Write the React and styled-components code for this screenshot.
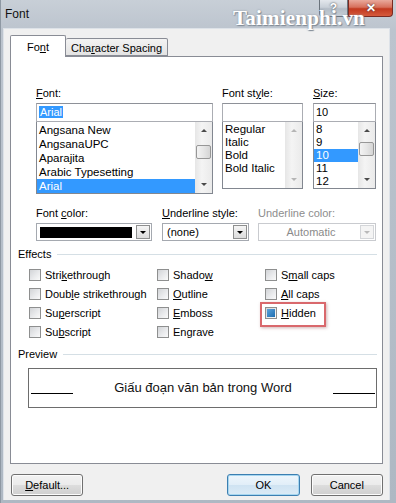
import React from 'react';
import styled, { createGlobalStyle } from 'styled-components';

const GlobalStyle = createGlobalStyle`
  html, body {
    margin: 0;
    padding: 0;
    background: #b9c2cc;
  }
  body {
    font-family: "Liberation Sans", Arial, sans-serif;
    font-size: 11px;
    color: #000;
  }
  u { text-decoration: underline; text-underline-offset: 1px; }
`

const Window = styled.div`
  position: relative;
  width: 396px;
  height: 503px;
  box-sizing: border-box;
  padding: 0 6px 3px 2px;
  display: flex;
  flex-direction: column;
  background: linear-gradient(180deg, #c8cfd7 0%, #bcc4ce 30px, #aeb8c3 100%);
  border-left: 1px solid #8e98a3;
  overflow: hidden;
`

const TitleBar = styled.div`
  height: 28px;
  display: flex;
  align-items: flex-start;
`

const Title = styled.div`
  font-size: 12px;
  padding: 7px 0 0 2px;
  color: #111;
`

const CaptionButtons = styled.div`
  margin-left: auto;
  margin-right: -3px;
  display: flex;
`

const CaptionBtn = styled.div`
  width: ${({w}) => w}px;
  height: 17px;
  box-sizing: border-box;
  border: 1px solid ${({close}) => close ? '#7a2a22' : '#6a737c'};
  border-top: none;
  border-radius: ${({close}) => close ? '0 0 4px 0' : '0 0 0 4px'};
  background: ${({close}) => close
    ? 'linear-gradient(180deg, #e9a99c 0%, #d7705c 45%, #c2391f 55%, #d55a3c 100%)'
    : 'linear-gradient(180deg, #e3e7ec 0%, #c9d0d8 45%, #b3bcc6 55%, #c6ced7 100%)'};
  color: #fff;
  font-weight: bold;
  font-size: 12px;
  display: flex;
  align-items: center;
  justify-content: center;
  text-shadow: 0 0 2px #333;
`

const Watermark = styled.div`
  position: absolute;
  left: 232px;
  top: 7px;
  font-family: "Liberation Serif", "Times New Roman", serif;
  font-weight: bold;
  font-size: 21px;
  line-height: 22px;
  color: #fff;
  letter-spacing: 0.2px;
  text-shadow: 0 0 2px #8d97a3, 1px 1px 1px #7d8793;
  pointer-events: none;
`

const Client = styled.div`
  flex: 1;
  background: #f0f0f0;
  padding: 6px 6px 0 6px;
  display: flex;
  flex-direction: column;
  border: 1px solid #dde2e8;
  border-bottom: none;
`

const Tabs = styled.div`
  height: 21px;
  display: flex;
  align-items: flex-end;
  position: relative;
  z-index: 1;
`

const Tab = styled.div`
  box-sizing: border-box;
  height: ${({active}) => active ? 22 : 18}px;
  margin-bottom: ${({active}) => active ? -1 : 0}px;
  padding: ${({active}) => active ? '5px 15px 0 15px' : '3px 0 0 0'};
  border: 1px solid #898c95;
  border-bottom: ${({active}) => active ? 'none' : '1px solid #898c95'};
  border-left: ${({first}) => first ? '1px solid #898c95' : 'none'};
  background: ${({active}) => active ? '#fff' : 'linear-gradient(180deg, #f3f3f3, #e3e3e3)'};
  border-radius: 2px 2px 0 0;
  width: ${({w}) => w}px;
  white-space: nowrap;
  text-align: center;
`

const Panel = styled.div`
  height: 408px;
  box-sizing: border-box;
  border: 1px solid #898c95;
  background: #fff;
  padding: 29px 6px 0 7px;
  display: flex;
  flex-direction: column;
`

const TopGrid = styled.div`
  margin-left: 18px;
  display: grid;
  grid-template-columns: 177px 81px 64px;
  column-gap: 9px;
  align-items: start;
  & > :nth-child(3) { margin-left: 1px; }
`

const Field = styled.div`
  display: flex;
  flex-direction: column;
`

const Label = styled.div`
  height: 14px;
  line-height: 14px;
  margin-bottom: ${({mb}) => mb ?? 3}px;
  color: ${({disabled}) => disabled ? '#8d8d8d' : '#000'};
  white-space: nowrap;
`

const EditBox = styled.div`
  height: 19px;
  box-sizing: border-box;
  border: 1px solid #abadb3;
  border-top-color: #8e9198;
  padding: 1px 2px;
  line-height: 15px;
`

const Selected = styled.span`
  background: #3399ff;
  color: #fff;
  padding: 0 1px;
`

const ListBox = styled.div`
  height: ${({h}) => h}px;
  box-sizing: border-box;
  border: 1px solid #828790;
  border-top: none;
  display: flex;
`

const Items = styled.div`
  flex: 1;
  padding-top: 1px;
  overflow: hidden;
`

const Item = styled.div`
  height: ${({lh}) => lh}px;
  line-height: ${({lh}) => lh}px;
  padding-left: ${({pl}) => pl ?? 2}px;
  font-size: 11.5px;
  background: ${({sel}) => sel ? '#3399ff' : 'transparent'};
  color: ${({sel}) => sel ? '#fff' : '#000'};
  white-space: nowrap;
`

const ScrollBar = styled.div`
  width: 17px;
  display: flex;
  flex-direction: column;
  background: linear-gradient(90deg, #e6e6e6, #f4f4f4 40%, #eaeaea);
`

const ArrowBox = styled.div`
  height: 17px;
  display: flex;
  align-items: center;
  justify-content: center;
`

const Tri = styled.div`
  width: 0;
  height: 0;
  border-left: 3px solid transparent;
  border-right: 3px solid transparent;
  ${({up, c}) => up ? `border-bottom: 3px solid ${c};` : `border-top: 3px solid ${c};`}
`

const Track = styled.div`
  flex: 1;
`

const Thumb = styled.div`
  margin: ${({top}) => top}px 1px 0 1px;
  height: 14px;
  box-sizing: border-box;
  border: 1px solid #979797;
  border-radius: 2px;
  background: linear-gradient(90deg, #f3f3f3, #e6e6e6 50%, #d5d5d5);
`

const SecondGrid = styled.div`
  margin: 12px 0 0 18px;
  display: grid;
  grid-template-columns: 116px 88px 118px;
  column-gap: 9px;
  & > :nth-child(2) { margin-left: 1px; }
`

const Combo = styled.div`
  height: 18px;
  box-sizing: border-box;
  border: 1px solid ${({disabled}) => disabled ? '#c9cbcf' : '#a5a9b0'};
  display: flex;
  align-items: center;
  padding: 0 1px 0 3px;
  color: ${({disabled}) => disabled ? '#8a8a8a' : '#000'};
`

const Swatch = styled.div`
  flex: 1;
  height: 11px;
  background: #000;
  margin-right: 4px;
`

const ComboText = styled.div`
  flex: 1;
  text-align: ${({center}) => center ? 'center' : 'left'};
  padding-left: ${({center}) => center ? 0 : 1}px;
`

const DropBtn = styled.div`
  width: 14px;
  height: 14px;
  box-sizing: border-box;
  border: 1px solid ${({disabled}) => disabled ? '#d4d6d9' : '#8e8f8f'};
  background: ${({disabled}) => disabled ? '#f4f4f4' : 'linear-gradient(180deg, #f5f5f5, #dcdcdc)'};
  display: flex;
  align-items: center;
  justify-content: center;
`

const GroupHead = styled.div`
  height: 14px;
  line-height: 14px;
  margin-top: ${({mt}) => mt}px;
  display: flex;
  align-items: center;
  margin-right: -1px;
  &::after {
    content: "";
    flex: 1;
    height: 1px;
    background: #d5dfe5;
    margin-left: 6px;
  }
`

const CheckGrid = styled.div`
  margin: 4px 0 0 11px;
  display: grid;
  grid-template-columns: 128px 108px 1fr;
  grid-auto-rows: 19px;
`

const CheckItem = styled.div`
  position: relative;
  display: flex;
  align-items: center;
  gap: ${({gap}) => gap ?? 4}px;
  white-space: nowrap;
`

const Box = styled.div`
  width: 12px;
  height: 12px;
  box-sizing: border-box;
  border: 1px solid #8e8f8f;
  background: linear-gradient(135deg, #d2d4d7 0%, #ebecee 60%, #fafafa 100%);
  display: flex;
  align-items: center;
  justify-content: center;
  &::after {
    content: "";
    display: ${({checked}) => checked ? 'block' : 'none'};
    width: 8px;
    height: 8px;
    background: linear-gradient(135deg, #5aa3da, #1f6db1);
  }
`

const Highlight = styled.div`
  position: absolute;
  left: -5px;
  top: -1px;
  width: 66px;
  height: 25px;
  box-sizing: border-box;
  border: 2px solid #d9686c;
  box-shadow: 1px 1px 3px rgba(120, 40, 40, 0.35);
`

const PreviewBox = styled.div`
  margin: 7px 0 0 10px;
  width: 349px;
  height: 40px;
  box-sizing: border-box;
  border: 1px solid #6d6d6d;
  display: flex;
  padding: 0 1px 0 2px;
`

const PreviewLine = styled.div`
  width: 42px;
  height: 1px;
  background: #000;
  margin-top: 24px;
`

const PreviewText = styled.div`
  flex: 1;
  text-align: center;
  font-size: 13px;
  line-height: 38px;
  color: #111;
`

const ButtonRow = styled.div`
  margin-top: 10px;
  display: flex;
  padding-left: 1px;
`

const Button = styled.div`
  width: ${({w}) => w ?? 73}px;
  height: 22px;
  box-sizing: border-box;
  border: 1px solid ${({primary}) => primary ? '#3c7fb1' : '#707070'};
  border-radius: 3px;
  background: ${({primary}) => primary
    ? 'linear-gradient(180deg, #eef6fc 0%, #e1eef8 50%, #cfe3f2 51%, #dbebf6 100%)'
    : 'linear-gradient(180deg, #f2f2f2 0%, #ebebeb 50%, #dddddd 51%, #cfcfcf 100%)'};
  box-shadow: inset 0 0 0 1px ${({primary}) => primary ? '#a6d6f0' : '#fcfcfc'};
  display: flex;
  align-items: center;
  justify-content: center;
  margin-left: ${({ml}) => ml ?? 0}px;
`

const fonts = ['Angsana New', 'AngsanaUPC', 'Aparajita', 'Arabic Typesetting', 'Arial']
const styles = ['Regular', 'Italic', 'Bold', 'Bold Italic']
const sizes = ['8', '9', '10', '11', '12']

const Scroll = ({thumb, disabled}) => (
  <ScrollBar>
    <ArrowBox><Tri up c={disabled ? '#b5b5b5' : '#4a4a4a'} /></ArrowBox>
    <Track>{thumb !== undefined && <Thumb top={thumb} />}</Track>
    <ArrowBox><Tri c={disabled ? '#b5b5b5' : '#4a4a4a'} /></ArrowBox>
  </ScrollBar>
)

const Check = ({label, checked, children}) => (
  <CheckItem>
    <Box checked={checked} />
    <span>{label}</span>
    {children}
  </CheckItem>
)

export default function App() {
  return (
    <>
      <GlobalStyle />
      <Window>
        <TitleBar>
          <Title>Font</Title>
          <CaptionButtons>
            <CaptionBtn w={29}>?</CaptionBtn>
            <CaptionBtn w={45} close>✕</CaptionBtn>
          </CaptionButtons>
        </TitleBar>
        <Watermark>Taimienphi.vn</Watermark>
        <Client>
          <Tabs>
            <Tab active first w={56}>Fo<u>n</u>t</Tab>
            <Tab w={102}>Cha<u>r</u>acter Spacing</Tab>
          </Tabs>
          <Panel>
            <TopGrid>
              <Field>
                <Label><u>F</u>ont:</Label>
                <EditBox><Selected>Arial</Selected></EditBox>
                <ListBox h={72}>
                  <Items>
                    {fonts.map(f => <Item key={f} lh={14} sel={f === 'Arial'}>{f}</Item>)}
                  </Items>
                  <Scroll thumb={6} />
                </ListBox>
              </Field>
              <Field>
                <Label>Font st<u>y</u>le:</Label>
                <EditBox />
                <ListBox h={67}>
                  <Items>
                    {styles.map(s => <Item key={s} lh={13}>{s}</Item>)}
                  </Items>
                  <Scroll disabled />
                </ListBox>
              </Field>
              <Field>
                <Label><u>S</u>ize:</Label>
                <EditBox>10</EditBox>
                <ListBox h={67}>
                  <Items>
                    {sizes.map(s => <Item key={s} lh={13} sel={s === '10'}>{s}</Item>)}
                  </Items>
                  <Scroll thumb={3} />
                </ListBox>
              </Field>
            </TopGrid>

            <SecondGrid>
              <Field>
                <Label>Font <u>c</u>olor:</Label>
                <Combo>
                  <Swatch />
                  <DropBtn><Tri c="#000" /></DropBtn>
                </Combo>
              </Field>
              <Field>
                <Label><u>U</u>nderline style:</Label>
                <Combo>
                  <ComboText>(none)</ComboText>
                  <DropBtn><Tri c="#000" /></DropBtn>
                </Combo>
              </Field>
              <Field>
                <Label disabled>Underline color:</Label>
                <Combo disabled>
                  <ComboText center>Automatic</ComboText>
                  <DropBtn disabled><Tri c="#b9b9b9" /></DropBtn>
                </Combo>
              </Field>
            </SecondGrid>

            <GroupHead mt={6}>Effects</GroupHead>
            <CheckGrid>
              <Check label={<>Stri<u>k</u>ethrough</>} />
              <Check label={<>Shado<u>w</u></>} />
              <Check label={<>S<u>m</u>all caps</>} />
              <Check label={<>Doub<u>l</u>e strikethrough</>} />
              <Check label={<><u>O</u>utline</>} />
              <Check label={<><u>A</u>ll caps</>} />
              <Check label={<>Su<u>p</u>erscript</>} />
              <Check label={<><u>E</u>mboss</>} />
              <Check label={<><u>H</u>idden</>} checked>
                <Highlight />
              </Check>
              <Check label={<>Su<u>b</u>script</>} />
              <Check label={<>En<u>g</u>rave</>} />
            </CheckGrid>

            <GroupHead mt={6}>Preview</GroupHead>
            <PreviewBox>
              <PreviewLine />
              <PreviewText>Giấu đoạn văn bản trong Word</PreviewText>
              <PreviewLine />
            </PreviewBox>
          </Panel>
          <ButtonRow>
            <Button><u>D</u>efault...</Button>
            <Button primary ml={144}>OK</Button>
            <Button ml={11}>Cancel</Button>
          </ButtonRow>
        </Client>
      </Window>
    </>
  )
}
